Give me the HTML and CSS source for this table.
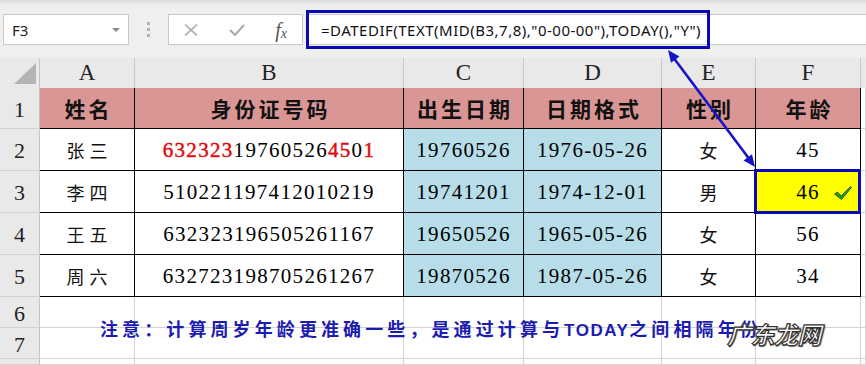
FILE: index.html
```html
<!DOCTYPE html>
<html lang="zh-CN">
<head>
<meta charset="utf-8">
<title>DATEDIF</title>
<link rel="stylesheet" href="styles.css">
</head>
<body>
<div class="page">
  <div class="toolbar">
    <div class="namebox"><span class="nb-text">F3</span><span class="nb-arrow"></span></div>
    <div class="dots"><i></i><i></i><i></i></div>
    <div class="fxbox">
      <svg class="ic" width="16" height="12" viewBox="0 0 16 12"><path d="M2 0.5 L14 11.5 M14 0.5 L2 11.5" stroke="#a9a9a9" stroke-width="1.6" fill="none"/></svg>
      <svg class="ic" width="16" height="12" viewBox="0 0 16 12"><path d="M1 6 L6 11 L15 1" stroke="#a9a9a9" stroke-width="2" fill="none"/></svg>
      <span class="fx">f<sub>x</sub></span>
    </div>
    <div class="fbar">
      <div class="fbox"></div>
      <span class="ftext">=DATEDIF(TEXT(MID(B3,7,8),"0-00-00"),TODAY(),"Y")</span>
    </div>
  </div>

  <div class="sheet">
    <div class="corner"><span class="tri"></span></div>
    <div class="ch">A</div><div class="ch">B</div><div class="ch">C</div><div class="ch">D</div><div class="ch">E</div><div class="ch">F</div><div class="ch ch-rest"></div>

    <div class="rh">1</div>
    <div class="c hd">姓名</div><div class="c hd">身份证号码</div><div class="c hd">出生日期</div><div class="c hd">日期格式</div><div class="c hd">性别</div><div class="c hd">年龄</div><div class="g"></div>

    <div class="rh">2</div>
    <div class="c cn">张三</div>
    <div class="c num"><span class="red">632323</span>19760526<span class="red">45</span>0<span class="red">1</span></div>
    <div class="c num blue">19760526</div><div class="c num blue">1976-05-26</div><div class="c cn">女</div><div class="c num">45</div><div class="g"></div>

    <div class="rh">3</div>
    <div class="c cn">李四</div><div class="c num">510221197412010219</div>
    <div class="c num blue">19741201</div><div class="c num blue">1974-12-01</div><div class="c cn">男</div>
    <div class="c num sel">46<svg class="tick" width="20" height="16" viewBox="0 0 20 16"><path d="M1.5 9 L4.5 7 L8 11 L17.5 1.5 L18.5 2.5 L8.5 14.5 Z" fill="#1e9e1e" stroke="#2b4a1a" stroke-width="0.8"/></svg></div><div class="g"></div>

    <div class="rh">4</div>
    <div class="c cn">王五</div><div class="c num">632323196505261167</div>
    <div class="c num blue">19650526</div><div class="c num blue">1965-05-26</div><div class="c cn">女</div><div class="c num">56</div><div class="g"></div>

    <div class="rh">5</div>
    <div class="c cn">周六</div><div class="c num">632723198705261267</div>
    <div class="c num blue">19870526</div><div class="c num blue">1987-05-26</div><div class="c cn">女</div><div class="c num">34</div><div class="g"></div>

    <div class="rh">6</div><div class="g"></div><div class="g"></div><div class="g"></div><div class="g"></div><div class="g"></div><div class="g"></div><div class="g"></div>
    <div class="rh">7</div><div class="g"></div><div class="g"></div><div class="g"></div><div class="g"></div><div class="g"></div><div class="g"></div><div class="g"></div>
    <div class="rh"></div><div class="g"></div><div class="g"></div><div class="g"></div><div class="g"></div><div class="g"></div><div class="g"></div><div class="g"></div>
  </div>

  <div class="note">注意：计算周岁年龄更准确一些，是通过计算与<b class="today">TODAY</b>之间相隔年份</div>
  <div class="wm">广东龙网</div>

  <svg class="arrow" width="866" height="365" viewBox="0 0 866 365">
    <line x1="673" y1="57" x2="750" y2="160" stroke="#1414c8" stroke-width="2.6"/>
    <polygon points="668,50 679.5,56.4 671,62.8" fill="#1414c8"/>
    <polygon points="755,167 743.5,160.6 752,154.2" fill="#1414c8"/>
  </svg>
</div>
</body>
</html>
```

FILE: styles.css
```css
* { box-sizing: border-box; }
html, body { margin: 0; padding: 0; }
body { width: 866px; height: 365px; overflow: hidden; background: #fff; }
.page { position: relative; width: 866px; height: 365px; overflow: hidden; }

.toolbar {
  height: 58px;
  background: linear-gradient(#dcdcdc 0, #e6e6e6 3px, #efefef 6px, #efefef 100%);
  display: flex;
  align-items: center;
  padding-left: 3px;
  padding-top: 1px;
}
.namebox {
  width: 126px; height: 31px;
  background: #fff; border: 1px solid #c9c9c9;
  display: flex; align-items: center; justify-content: space-between;
  padding: 0 8px 0 8px;
  font-family: "Noto Sans", "Open Sans", sans-serif; font-size: 15px; color: #222;
}
.nb-arrow { width: 0; height: 0; border-left: 4px solid transparent; border-right: 4px solid transparent; border-top: 4px solid #8a8a8a; }
.dots { width: 39px; display: flex; flex-direction: column; align-items: center; gap: 3px; }
.dots i { display: block; width: 3px; height: 3px; background: #b2b2b2; }
.fxbox {
  width: 135px; height: 31px;
  background: #fff; border: 1px solid #c9c9c9;
  display: flex; align-items: center; justify-content: space-between;
  padding: 0 15px 0 14px;
}
.fx { font-family: "Liberation Serif", serif; font-style: italic; font-size: 20px; color: #555; line-height: 1; }
.fx sub { font-size: 14px; vertical-align: 0; position: relative; top: 1px; }
.fbar {
  position: relative;
  flex: 1; height: 31px; margin-left: 3px;
  background: #fff; border-top: 1px solid #c9c9c9; border-bottom: 1px solid #c9c9c9;
  display: flex; align-items: center; padding-left: 15px;
}
.fbox { position: absolute; left: 0; top: -5px; width: 404px; height: 39px; border: 3px solid #0a0ab4; }
.ftext { font-family: "Noto Sans", "Open Sans", sans-serif; font-size: 15px; color: #111; white-space: nowrap; letter-spacing: 0.5px; }

.sheet {
  display: grid;
  grid-template-columns: 40px 95px 269px 120px 138px 94px 105px 1fr;
  grid-template-rows: 30px 41px 42px 42px 42px 42px 31px 31px 6px;
}
.corner { background: #e9e9e9; border-right: 1px solid #c4c4c4; position: relative; }
.tri { position: absolute; left: 14px; top: 5px; width: 0; height: 0; border-left: 22px solid transparent; border-bottom: 21px solid #b4b4b4; }
.ch {
  background: #e9e9e9; border-right: 1px solid #c8c8c8;
  display: flex; align-items: center; justify-content: center;
  font-family: "Liberation Serif", serif; font-size: 23px; color: #222;
}
.ch-rest { border-right: none; }
.rh {
  background: #e9e9e9; border-right: 1px solid #c4c4c4; border-bottom: 1px solid #d2d2d2;
  display: flex; align-items: center; justify-content: center;
  font-family: "Liberation Serif", serif; font-size: 22px; color: #222; padding-top: 3px;
}
.c {
  border-right: 1px solid #000; border-bottom: 1px solid #000;
  display: flex; align-items: center; justify-content: center;
  color: #000; white-space: nowrap;
}
.g { border-right: 1px solid #d4d4d4; border-bottom: 1px solid #d4d4d4; }
.hd {
  background: #d99694;
  font-family: "Noto Sans CJK SC", sans-serif; font-weight: 700; font-size: 21px; letter-spacing: 3px;
  color: #111; padding-left: 3px;
}
.cn { font-family: "Noto Sans CJK SC", sans-serif; font-size: 18px; letter-spacing: 5px; padding-left: 5px; font-weight: 400; color: #111; }
.num { font-family: "Liberation Serif", serif; font-size: 21px; letter-spacing: 1.3px; padding-top: 2px; }
.red { color: #e00b0b; -webkit-text-stroke: 0.45px #e00b0b; }
.blue { background: #b7dde8; }
.sel { background: #ffff00; position: relative; }
.sel::after { content: ""; position: absolute; left: -2px; top: -2px; right: -1px; bottom: -2px; border: 3px solid #0a0ab4; }
.tick { position: absolute; right: 7px; top: 14px; }

.note {
  position: absolute; left: 100px; top: 314px;
  font-family: "Noto Sans CJK SC", sans-serif; font-weight: 700; font-size: 18px; letter-spacing: 4.1px;
  color: #1c1cb0; white-space: nowrap; line-height: 28px;
}
.today { font-family: "Liberation Sans", Arial, sans-serif; font-size: 17px; letter-spacing: 1.5px; }
.wm {
  position: absolute; left: 727px; top: 316px;
  font-family: "Noto Sans CJK SC", sans-serif; font-weight: 700; font-size: 24px; font-style: italic;
  color: #fff; letter-spacing: -0.5px;
  -webkit-text-stroke: 1.2px #333;
  text-shadow: 1px 1px 1px #666;
}
.arrow { position: absolute; left: 0; top: 0; pointer-events: none; }
```
